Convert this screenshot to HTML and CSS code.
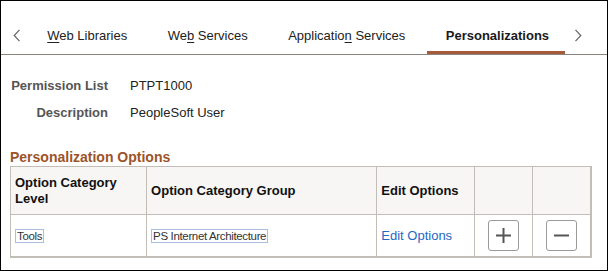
FILE: index.html
```html
<!DOCTYPE html>
<html>
<head>
<meta charset="utf-8">
<link rel="stylesheet" href="styles.css">
</head>
<body>
<div class="frame">
  <nav class="tabbar">
    <span class="chev chev-left"><svg width="8" height="13" viewBox="0 0 8 13"><path d="M6.5 0.8 L1.2 6.5 L6.5 12.2" fill="none" stroke="#666" stroke-width="1.2"/></svg></span>
    <div class="tabs">
      <span class="tab"><u>W</u>eb Libraries</span>
      <span class="tab">We<u>b</u> Services</span>
      <span class="tab">Applicatio<u>n</u> Services</span>
      <span class="tab active">Personalizations</span>
    </div>
    <span class="chev chev-right"><svg width="8" height="13" viewBox="0 0 8 13"><path d="M1.5 0.8 L6.8 6.5 L1.5 12.2" fill="none" stroke="#666" stroke-width="1.2"/></svg></span>
  </nav>

  <div class="fields">
    <div class="label">Permission List</div><div class="value">PTPT1000</div>
    <div class="label">Description</div><div class="value">PeopleSoft User</div>
  </div>

  <h2 class="section">Personalization Options</h2>

  <table class="grid">
    <colgroup>
      <col class="c1"><col class="c2"><col class="c3"><col class="c4"><col class="c5">
    </colgroup>
    <thead>
      <tr>
        <th>Option Category<br>Level</th>
        <th>Option Category Group</th>
        <th>Edit Options</th>
        <th></th>
        <th></th>
      </tr>
    </thead>
    <tbody>
      <tr>
        <td><span class="box">Tools</span></td>
        <td><span class="box">PS Internet Architecture</span></td>
        <td><a class="link">Edit Options</a></td>
        <td class="btncell"><span class="btn"><svg width="15" height="15" viewBox="0 0 15 15"><path d="M0 7.5 H15 M7.5 0 V15" stroke="#555" stroke-width="2"/></svg></span></td>
        <td class="btncell"><span class="btn"><svg width="15" height="15" viewBox="0 0 15 15"><path d="M0 7.5 H15" stroke="#555" stroke-width="2"/></svg></span></td>
      </tr>
    </tbody>
  </table>
</div>
</body>
</html>
```

FILE: styles.css
```css
html, body {
  margin: 0;
  padding: 0;
  background: #fff;
}
.frame {
  box-sizing: border-box;
  width: 608px;
  height: 271px;
  border: 1px solid #000;
  font-family: "Liberation Sans", Arial, sans-serif;
  font-size: 13px;
  color: #222;
  overflow: hidden;
}
.tabbar {
  display: flex;
  align-items: flex-start;
  padding-top: 20px;
  padding-left: 12px;
  border-bottom: 1px solid #8b8580;
  height: 33px;
}
.chev {
  display: flex;
  align-items: center;
  height: 33px;
}
.chev svg { display: block; margin-top: -4px; }
.chev-left { width: 8px; }
.chev-right { width: 8px; margin-left: 5px; }
.tabs {
  display: flex;
  margin-left: 6px;
}
.tab {
  position: relative;
  padding: 1px 20.25px 4px;
  line-height: 28px;
  color: #222;
  white-space: nowrap;
}
.tab u { text-decoration: underline; text-underline-offset: 2px; }
.tab.active {
  font-weight: bold;
  color: #1a1a1a;
}
.tab.active::after {
  content: "";
  position: absolute;
  left: 1.5px;
  right: 4.5px;
  bottom: 0;
  height: 3px;
  background: #a65a3a;
}
.fields {
  display: grid;
  grid-template-columns: 107px auto;
  column-gap: 22px;
  row-gap: 9px;
  padding-top: 22px;
  line-height: 18px;
}
.label {
  text-align: right;
  font-weight: bold;
  color: #555;
}
.value { color: #222; }
.section {
  margin: 27px 0 0 9px;
  font-size: 14px;
  line-height: 17px;
  font-weight: bold;
  color: #9c5428;
}
.grid {
  margin-left: 9px;
  width: 582px;
  border-collapse: collapse;
  table-layout: fixed;
  border-right: 2px solid #c2bdb7;
  border-bottom: 2px solid #c2bdb7;
}
.c1 { width: 136px; }
.c2 { width: 230px; }
.c3 { width: 98px; }
.c4 { width: 58px; }
.c5 { width: 58px; }
.grid th, .grid td {
  border: 1px solid #c2bdb7;
  padding: 0 4px;
  text-align: left;
  vertical-align: middle;
}
.grid th {
  background: #f7f6f4;
  height: 47px;
  font-weight: bold;
  line-height: 16px;
  color: #111;
}
.grid td {
  height: 41px;
  line-height: 16px;
}
.box {
  display: inline-block;
  border: 1px solid #a9bfdd;
  padding: 0 1px;
  font-size: 11.5px;
  letter-spacing: -0.35px;
  line-height: 12px;
  color: #333;
}
.link {
  color: #1f67c4;
  cursor: pointer;
}
.grid td.btncell {
  padding: 0;
  text-align: center;
}
.btn {
  display: inline-flex;
  align-items: center;
  justify-content: center;
  box-sizing: border-box;
  width: 31px;
  height: 31px;
  border: 1px solid #9a9a9a;
  border-radius: 3px;
  background: #fff;
  vertical-align: middle;
}
.btn svg { display: block; }
```
